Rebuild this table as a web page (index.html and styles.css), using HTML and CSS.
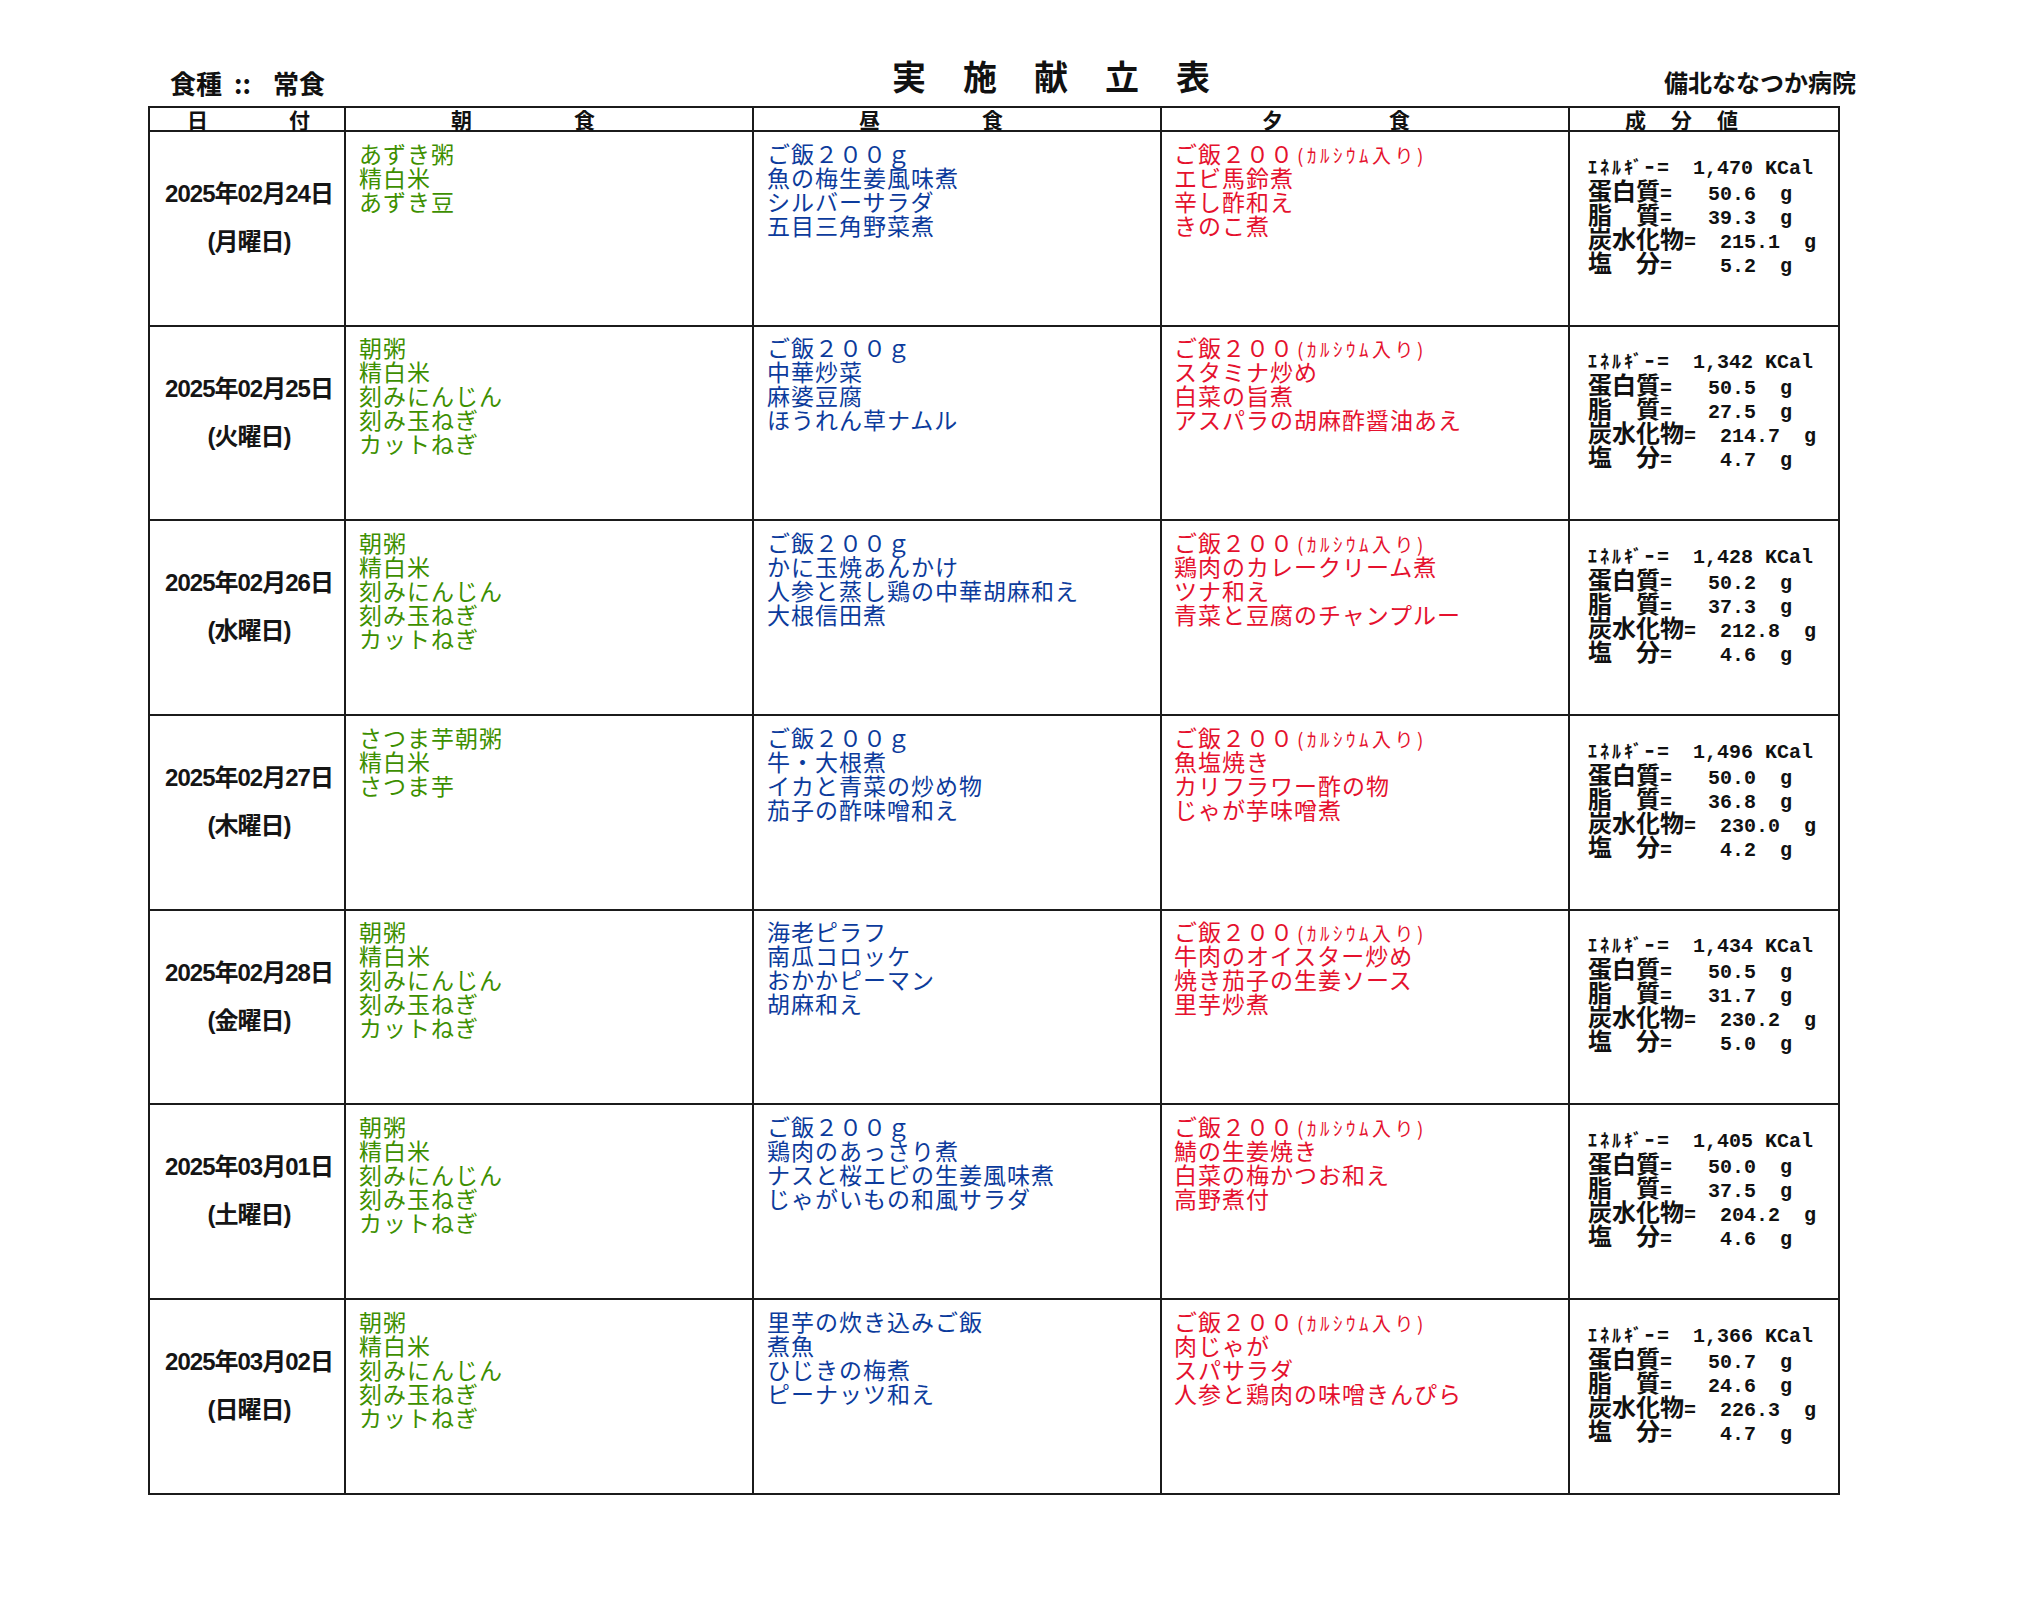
FILE: index.html
```html
<!DOCTYPE html>
<html lang="ja">
<head>
<meta charset="utf-8">
<title>実施献立表</title>
<link rel="stylesheet" href="styles.css">
</head>
<body>
<div class="page">
  <div class="top">
    <div class="kind"><span>食種</span><span class="colon">::</span><span>常食</span></div>
    <div class="title">実施献立表</div>
    <div class="hosp">備北ななつか病院</div>
  </div>

  <div class="sheet">
    <div class="hd hd-date"><span>日</span><span>付</span></div>
    <div class="hd hd-meal"><span>朝</span><span>食</span></div>
    <div class="hd hd-meal"><span>昼</span><span>食</span></div>
    <div class="hd hd-meal hd-din"><span>夕</span><span>食</span></div>
    <div class="hd hd-nut"><span>成</span><span>分</span><span>値</span></div>

    <!-- 02/24 -->
    <div class="date"><div>2025年02月24日</div><div>(月曜日)</div></div>
    <div class="menu bf">あずき粥<br>精白米<br>あずき豆</div>
    <div class="menu lu">ご飯２００ｇ<br>魚の梅生姜風味煮<br>シルバーサラダ<br>五目三角野菜煮</div>
    <div class="menu dn">ご飯２００<span class="sm">(ｶﾙｼｳﾑ入り)</span><br>エビ馬鈴煮<br>辛し酢和え<br>きのこ煮</div>
    <div class="nut">
      <div class="n"><span class="k">ｴﾈﾙｷﾞｰ</span>=  1,470 KCal</div>
      <div class="n"><span class="j">蛋白質</span>=   50.6  g</div>
      <div class="n"><span class="j">脂　質</span>=   39.3  g</div>
      <div class="n"><span class="j">炭水化物</span>=  215.1  g</div>
      <div class="n"><span class="j">塩　分</span>=    5.2  g</div>
    </div>

    <!-- 02/25 -->
    <div class="date"><div>2025年02月25日</div><div>(火曜日)</div></div>
    <div class="menu bf">朝粥<br>精白米<br>刻みにんじん<br>刻み玉ねぎ<br>カットねぎ</div>
    <div class="menu lu">ご飯２００ｇ<br>中華炒菜<br>麻婆豆腐<br>ほうれん草ナムル</div>
    <div class="menu dn">ご飯２００<span class="sm">(ｶﾙｼｳﾑ入り)</span><br>スタミナ炒め<br>白菜の旨煮<br>アスパラの胡麻酢醤油あえ</div>
    <div class="nut">
      <div class="n"><span class="k">ｴﾈﾙｷﾞｰ</span>=  1,342 KCal</div>
      <div class="n"><span class="j">蛋白質</span>=   50.5  g</div>
      <div class="n"><span class="j">脂　質</span>=   27.5  g</div>
      <div class="n"><span class="j">炭水化物</span>=  214.7  g</div>
      <div class="n"><span class="j">塩　分</span>=    4.7  g</div>
    </div>

    <!-- 02/26 -->
    <div class="date"><div>2025年02月26日</div><div>(水曜日)</div></div>
    <div class="menu bf">朝粥<br>精白米<br>刻みにんじん<br>刻み玉ねぎ<br>カットねぎ</div>
    <div class="menu lu">ご飯２００ｇ<br>かに玉焼あんかけ<br>人参と蒸し鶏の中華胡麻和え<br>大根信田煮</div>
    <div class="menu dn">ご飯２００<span class="sm">(ｶﾙｼｳﾑ入り)</span><br>鶏肉のカレークリーム煮<br>ツナ和え<br>青菜と豆腐のチャンプルー</div>
    <div class="nut">
      <div class="n"><span class="k">ｴﾈﾙｷﾞｰ</span>=  1,428 KCal</div>
      <div class="n"><span class="j">蛋白質</span>=   50.2  g</div>
      <div class="n"><span class="j">脂　質</span>=   37.3  g</div>
      <div class="n"><span class="j">炭水化物</span>=  212.8  g</div>
      <div class="n"><span class="j">塩　分</span>=    4.6  g</div>
    </div>

    <!-- 02/27 -->
    <div class="date"><div>2025年02月27日</div><div>(木曜日)</div></div>
    <div class="menu bf">さつま芋朝粥<br>精白米<br>さつま芋</div>
    <div class="menu lu">ご飯２００ｇ<br>牛・大根煮<br>イカと青菜の炒め物<br>茄子の酢味噌和え</div>
    <div class="menu dn">ご飯２００<span class="sm">(ｶﾙｼｳﾑ入り)</span><br>魚塩焼き<br>カリフラワー酢の物<br>じゃが芋味噌煮</div>
    <div class="nut">
      <div class="n"><span class="k">ｴﾈﾙｷﾞｰ</span>=  1,496 KCal</div>
      <div class="n"><span class="j">蛋白質</span>=   50.0  g</div>
      <div class="n"><span class="j">脂　質</span>=   36.8  g</div>
      <div class="n"><span class="j">炭水化物</span>=  230.0  g</div>
      <div class="n"><span class="j">塩　分</span>=    4.2  g</div>
    </div>

    <!-- 02/28 -->
    <div class="date"><div>2025年02月28日</div><div>(金曜日)</div></div>
    <div class="menu bf">朝粥<br>精白米<br>刻みにんじん<br>刻み玉ねぎ<br>カットねぎ</div>
    <div class="menu lu">海老ピラフ<br>南瓜コロッケ<br>おかかピーマン<br>胡麻和え</div>
    <div class="menu dn">ご飯２００<span class="sm">(ｶﾙｼｳﾑ入り)</span><br>牛肉のオイスター炒め<br>焼き茄子の生姜ソース<br>里芋炒煮</div>
    <div class="nut">
      <div class="n"><span class="k">ｴﾈﾙｷﾞｰ</span>=  1,434 KCal</div>
      <div class="n"><span class="j">蛋白質</span>=   50.5  g</div>
      <div class="n"><span class="j">脂　質</span>=   31.7  g</div>
      <div class="n"><span class="j">炭水化物</span>=  230.2  g</div>
      <div class="n"><span class="j">塩　分</span>=    5.0  g</div>
    </div>

    <!-- 03/01 -->
    <div class="date"><div>2025年03月01日</div><div>(土曜日)</div></div>
    <div class="menu bf">朝粥<br>精白米<br>刻みにんじん<br>刻み玉ねぎ<br>カットねぎ</div>
    <div class="menu lu">ご飯２００ｇ<br>鶏肉のあっさり煮<br>ナスと桜エビの生姜風味煮<br>じゃがいもの和風サラダ</div>
    <div class="menu dn">ご飯２００<span class="sm">(ｶﾙｼｳﾑ入り)</span><br>鯖の生姜焼き<br>白菜の梅かつお和え<br>高野煮付</div>
    <div class="nut">
      <div class="n"><span class="k">ｴﾈﾙｷﾞｰ</span>=  1,405 KCal</div>
      <div class="n"><span class="j">蛋白質</span>=   50.0  g</div>
      <div class="n"><span class="j">脂　質</span>=   37.5  g</div>
      <div class="n"><span class="j">炭水化物</span>=  204.2  g</div>
      <div class="n"><span class="j">塩　分</span>=    4.6  g</div>
    </div>

    <!-- 03/02 -->
    <div class="date"><div>2025年03月02日</div><div>(日曜日)</div></div>
    <div class="menu bf">朝粥<br>精白米<br>刻みにんじん<br>刻み玉ねぎ<br>カットねぎ</div>
    <div class="menu lu">里芋の炊き込みご飯<br>煮魚<br>ひじきの梅煮<br>ピーナッツ和え</div>
    <div class="menu dn">ご飯２００<span class="sm">(ｶﾙｼｳﾑ入り)</span><br>肉じゃが<br>スパサラダ<br>人参と鶏肉の味噌きんぴら</div>
    <div class="nut">
      <div class="n"><span class="k">ｴﾈﾙｷﾞｰ</span>=  1,366 KCal</div>
      <div class="n"><span class="j">蛋白質</span>=   50.7  g</div>
      <div class="n"><span class="j">脂　質</span>=   24.6  g</div>
      <div class="n"><span class="j">炭水化物</span>=  226.3  g</div>
      <div class="n"><span class="j">塩　分</span>=    4.7  g</div>
    </div>
  </div>
</div>
</body>
</html>
```

FILE: styles.css
```css
html, body {
  margin: 0;
  padding: 0;
  background: #ffffff;
}

body {
  font-family: "Noto Sans CJK JP", sans-serif;
  color: #111111;
}

.page {
  padding-left: 148px;
  width: 1692px;
}

/* ---------- top line ---------- */
.top {
  display: grid;
  grid-template-columns: 744px 500px 1fr;
  align-items: start;
  height: 106px;
}

.kind {
  display: flex;
  margin-top: 70px;
  padding-left: 22px;
  font-size: 26px;
  line-height: 26px;
  font-weight: 700;
  white-space: nowrap;
}

.colon {
  margin: 0 22px 0 12px;
}

.title {
  margin-top: 59px;
  font-size: 34px;
  line-height: 34px;
  font-weight: 700;
  letter-spacing: 37px;
  white-space: nowrap;
}

.hosp {
  justify-self: end;
  margin-top: 70px;
  margin-right: -16px;
  font-size: 24px;
  line-height: 24px;
  font-weight: 700;
  white-space: nowrap;
}

/* ---------- sheet ---------- */
.sheet {
  display: grid;
  grid-template-columns: 194px 406px 406px 406px 268px;
  grid-template-rows: 22px repeat(7, 192.7px);
  gap: 2px;
  padding: 2px;
  background: #1b1b1b;
  width: max-content;
}

.sheet > div {
  background: #ffffff;
}

.hd {
  display: flex;
  align-items: flex-end;
  font-size: 21px;
  line-height: 21px;
  font-weight: 700;
  overflow: visible;
}

.hd-date {
  padding-left: 37px;
  gap: 81px;
}

.hd-meal {
  padding-left: 105px;
  gap: 102px;
}

.hd-din {
  padding-left: 100px;
  gap: 106px;
}

.hd-nut {
  padding-left: 55px;
  gap: 25px;
}

/* date column */
.date {
  display: flex;
  flex-direction: column;
  align-items: center;
  gap: 24px;
  padding-top: 50px;
  padding-left: 4px;
  font-family: "Liberation Sans", "Noto Sans CJK JP", sans-serif;
  font-size: 24px;
  line-height: 24px;
  font-weight: 700;
  letter-spacing: -1px;
  color: #151515;
}

/* menu columns */
.menu {
  padding: 8.5px 12px 0 13px;
  font-size: 23px;
  line-height: 24px;
  letter-spacing: 1px;
  font-weight: 400;
  white-space: nowrap;
}

.bf { color: #3d8f00; }
.lu { color: #0c3b9c; }
.dn { color: #e5112e; padding-left: 12px; }

.sm {
  font-size: 19px;
  line-height: 1;
  letter-spacing: 3.5px;
  padding-left: 3px;
}

/* nutrition column */
.nut {
  padding: 21.5px 0 0 18px;
  font-family: "Liberation Mono", monospace;
  font-size: 20px;
  font-weight: 700;
  color: #111111;
}

.n {
  height: 24px;
  line-height: 24px;
  white-space: pre;
}

.j {
  font-family: "Noto Sans CJK JP", sans-serif;
  font-size: 24px;
  font-weight: 700;
}

.k {
  font-family: "Noto Sans CJK JP", sans-serif;
  font-size: 18px;
  letter-spacing: 3px;
  font-weight: 700;
}
```
